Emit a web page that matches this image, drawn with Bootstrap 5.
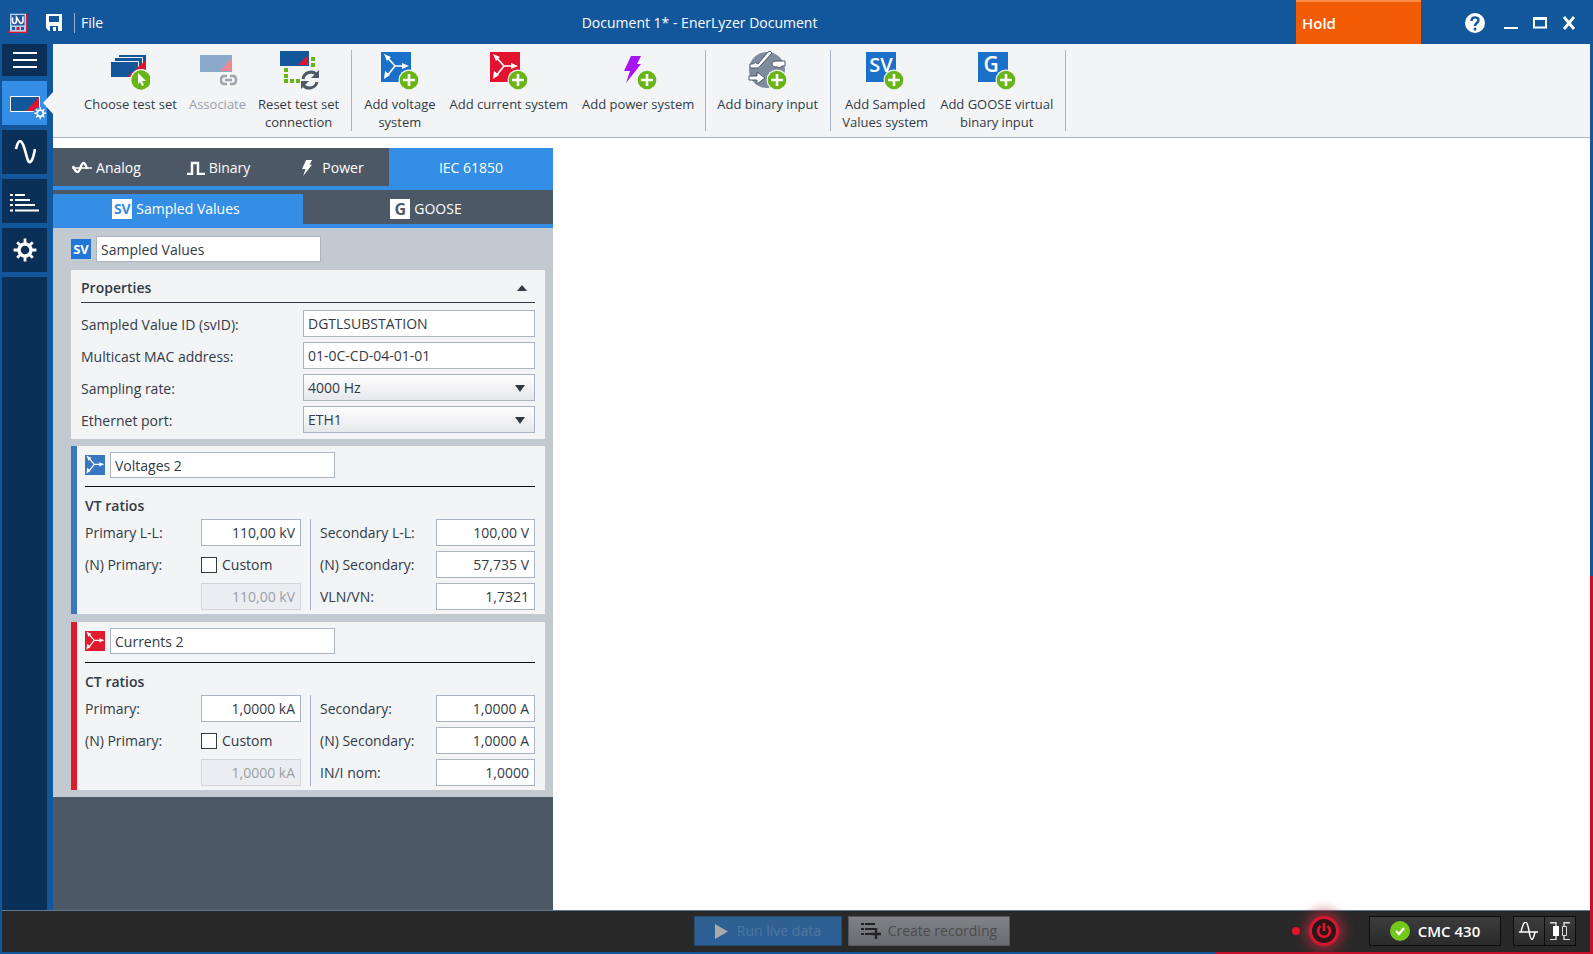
<!DOCTYPE html>
<html lang="en">
<head>
<meta charset="utf-8">
<meta name="viewport" content="width=device-width, initial-scale=1">
<title>Document 1* - EnerLyzer Document</title>
<link href="https://cdn.jsdelivr.net/npm/bootstrap@5.3.0/dist/css/bootstrap.min.css" rel="stylesheet">
<style>
:root{--blue:#12579c;--navy:#0b3058;--sky:#348ee6;--slate:#4d5866;--paper:#f2f4f6;--steel:#c3c9d1;--line:#abb4c3;--ink:#333a46}
body{font-family:"Open Sans","Noto Sans",sans-serif;font-size:14px;line-height:18px;color:var(--ink);background:var(--blue)}
button{border:0;background:none;color:inherit;padding:0}
a{color:inherit;text-decoration:none}
svg{display:block;flex:none}
.frame{min-height:100vh;border-right:3px solid var(--blue);border-bottom:2px solid var(--blue);position:relative}
.edge-right{position:absolute;right:-3px;top:60.5%;bottom:-2px;width:3px;background:#c8102a}
.edge-bottom{position:absolute;right:-3px;left:76.5%;bottom:-2px;height:2px;background:#c8102a}
.titlebar{height:44px;color:#fff;padding-top:1px}
.title-left{padding-left:8px;gap:17px}
.file-link{border-left:1px solid #8fb0d2;padding:0 0 0 6px;line-height:20px;margin-left:-6px}
.hold{width:125px;background:#f25c05;border-top:2px solid #ff8a45;font-weight:600;font-size:15px;padding-left:6px;margin:-1px 44px 0 0}
.win{gap:15px;padding-right:14px}
.side{width:53px;padding-left:2px;gap:5px}
.side button,.side-fill{width:45px;height:44px;background:var(--navy);display:flex;align-items:center;justify-content:center}
.side .menu-btn{height:32px}
.side .on{background:var(--sky);position:relative}
.side .on::after{content:"";position:absolute;right:-6px;top:11px;border:11px solid transparent;border-left:0;border-right:10px solid var(--paper)}
.side-fill{flex:1 1 auto;height:auto}
.ribbon{background:var(--paper);border-bottom:1px solid var(--line);height:94px;padding:6px 0 5px 25px}
.group-bar{border-right:1px solid var(--line);padding:0 6px 0 5px;height:81px}
.group-bar button{display:flex;flex-direction:column;align-items:center;padding:0 6px;line-height:18px;gap:5px;font-size:13px;color:var(--ink)}
.group-wide button{padding:0 7px}
.group-wide{padding:0 4px 0 5px}
.group-bar button svg{width:40px;height:40px}
.group-bar button:disabled{color:#9da1a7}
.work{padding-top:10px}
.panel{width:500px;background:var(--slate)}
.tabs-main{border-bottom:4px solid var(--sky);height:42px;color:#fff}
.tabs-main button,.tabs-sub button{display:flex;align-items:center;justify-content:center;gap:4px}
.tabs-main button{width:112px;padding:1px 5px 0 0}
.tabs-main .power-tab{gap:10px;padding-right:0}
.tabs-main .wide{background:var(--sky);padding-right:0}
.tabs-sub{border-bottom:4px solid var(--sky);height:34px;margin-top:4px;color:#fff}
.tabs-sub button{flex:1;padding-right:4px}
.tabs-sub .on{background:var(--sky)}
.tag{width:20px;height:20px;font:700 13px/20px "Open Sans",sans-serif;text-align:center;background:#fff;color:var(--sky);flex:none}
.tabs-sub .tag{font-size:14px}
.tabs-sub .tag-dark{color:var(--slate);font-size:16px}
.tag-blue{background:#1f78d8;color:#fff}
.settings{background:var(--steel);padding:8px 8px 7px 18px}
.name-row{gap:5px}
.field{border:1px solid var(--line);background:#fff;height:27px;padding:0 4px;color:var(--ink);border-radius:0;min-width:0;width:100%;outline:0}
.field-name{width:225px;height:26px}
select.field{appearance:none;background:linear-gradient(#fff,#e6e7ea)}
.pick{position:relative}
.pick svg{position:absolute;right:10px;top:11px}
.box{background:var(--paper)}
.props{padding:6px 10px;margin-bottom:7px}
.props h2,.sys h3{font-size:14px;line-height:24px;font-weight:600;margin:0}
.props-head{border-bottom:1px solid var(--ink);padding-bottom:2px;margin-bottom:7px}
.prop-grid{display:grid;grid-template-columns:222px 1fr;row-gap:5px;align-items:center}
.prop-grid label{padding-top:2px}
.sys{border-left:6px solid #3b76c0;padding:6px 10px 4px 8px}
.sys-red{border-color:#e01b2d}
.sys-head{border-bottom:1px solid #111;padding-bottom:8px;gap:5px}
.sys h3{margin-top:8px;padding-bottom:2px;line-height:22px}
.pair-grid{display:grid;grid-template-columns:116px 100px 1fr}
.pair-grid>div{display:grid;grid-auto-rows:27px;row-gap:5px;align-items:center}
.pair-grid .right-side{grid-template-columns:116px 1fr;border-left:1px solid var(--line);padding-left:9px;margin-left:9px}
.pair-grid .field{text-align:right;padding-right:5px}
.pair-grid .field:disabled{background:#ebedf1;border-color:#d0d4db;color:#9b9fa6}
.custom-row{gap:5px}
.tick{appearance:none;width:16px;height:16px;border:1px solid var(--ink);background:#fff;margin:0}
.footbar{height:42px;margin-left:2px;background:#282828;border-top:1px solid #5d7894;display:grid;grid-template-columns:11fr auto 9fr;align-items:center;padding:0 14px 1px 0}
.acts{gap:6px}
.act{height:30px;font-size:14px;display:flex;align-items:center;justify-content:center}
.run{width:148px;background:linear-gradient(#30608f,#2a5f98);border:1px solid #24496f;color:#50779f;gap:9px}
.rec{width:162px;background:linear-gradient(#818286,#6a6b6f);border:1px solid #55575a;color:#4a4b4f;gap:7px}
.dev{height:30px;border:1px solid #0c0c0c;background:linear-gradient(#3c3c3c,#2a2a2a);color:#fff;font-weight:600;font-size:15px}
.dev-name{width:132px;display:flex;align-items:center;justify-content:center;gap:8px;margin-right:12px}
.dev-icon{width:32px;display:flex;align-items:center;justify-content:center}
.dev-icon+.dev-icon{margin-left:-1px}
.rec-dot{width:8px;height:8px;border-radius:50%;background:#e8112d;margin-right:9px}
.power{width:30px;height:30px;border-radius:50%;border:3px solid #d8162f;background:#2a1517;box-shadow:0 0 14px 3px #b0283a;margin-right:30px;display:flex;align-items:center;justify-content:center}
</style>
</head>
<body>
<svg width="0" height="0" class="position-absolute" aria-hidden="true">
<defs>
<g id="plus"><circle cx="28" cy="28" r="10.5" fill="#f2f4f6"/><circle cx="28" cy="28" r="9.3" fill="#68b516"/><path d="M28 22v12M22 28h12" stroke="#fff" stroke-width="2.6"/></g>
<g id="star"><path d="M12 13 4 4M12 13 4 23M12 13h12" stroke="#fff" stroke-width="1.7" fill="none"/><path d="m1 1 7 3-4 4zM1 26l1-8 5 4zM26 13l-7-3v6z" fill="#fff"/></g>
<g id="cog" fill="none" stroke="#fff"><circle cx="12" cy="12" r="6" stroke-width="3.4"/><path d="M12 5V.6M12 19v4.4M5 12H.6M19 12h4.4M7 7 4.2 4.2M17 7l2.8-2.8M7 17l-2.8 2.8M17 17l2.8 2.8" stroke-width="2.8"/></g>
<path id="bolt" d="M7 0h10l-4 8h4L2 27l4-12H0z"/>
</defs>
</svg>
<div class="frame d-flex flex-column">
<header class="titlebar d-flex align-items-center">
  <div class="title-left d-flex align-items-center">
    <svg width="20" height="20" viewBox="0 0 20 20"><path d="M18 1h2v19H0v-2h18z" fill="#d8142f"/><rect x="2" y="0.700" width="16" height="18" fill="#b9cfe8"/><rect x="3.500" y="2" width="13" height="10.500" fill="#1b59a0"/><path d="M4.500 4.500v3q0 3 2 3t2-3v-3l4 6q2.500 0 2.500-3v-4" fill="none" stroke="#fff" stroke-width="1.600"/><path d="M4 15.500h3M13 15.500h3" stroke="#1b59a0" stroke-width="3"/><path d="M8.500 15.500h3" stroke="#d8142f" stroke-width="3"/></svg>
    <button aria-label="Save"><svg width="18" height="18" viewBox="0 0 18 18"><path d="M1 0h16v17H4l-3-3z" fill="#fff"/><path d="M4 2h10v6H4zM5 12h8v5h-2v-4H8v4H5z" fill="#12579c"/></svg></button>
    <a href="#" class="file-link">File</a>
  </div>
  <div class="flex-grow-1 text-center">Document 1* - EnerLyzer Document</div>
  <div class="d-flex align-items-center align-self-stretch">
    <div class="hold d-flex align-items-center align-self-stretch">Hold</div>
    <div class="win d-flex align-items-center">
      <button aria-label="Help" class="me-1"><svg width="20" height="20" viewBox="0 0 20 20"><circle cx="10" cy="10" r="10" fill="#fff"/><path d="M6.500 8c0-5 7-4.500 7-.800C13.500 10 10 10 10 13" fill="none" stroke="#12579c" stroke-width="2.400"/><circle cx="10" cy="16" r="1.500" fill="#12579c"/></svg></button>
      <button aria-label="Minimize"><svg width="14" height="14" viewBox="0 0 14 14"><path d="M0 12h14" stroke="#fff" stroke-width="2"/></svg></button>
      <button aria-label="Maximize"><svg width="14" height="14" viewBox="0 0 14 14"><path d="M1 2.500h12v9H1z" stroke="#fff" stroke-width="2" fill="none"/><path d="M0 2.500h14" stroke="#fff" stroke-width="3"/></svg></button>
      <button aria-label="Close"><svg width="14" height="14" viewBox="0 0 14 14"><path d="m2 1 10 12M12 1 2 13" stroke="#fff" stroke-width="2.800"/></svg></button>
    </div>
  </div>
</header>
<div class="d-flex flex-grow-1">
  <nav class="side d-flex flex-column flex-shrink-0" aria-label="Views">
    <button class="menu-btn" aria-label="Menu"><svg width="24" height="16" viewBox="0 0 24 16"><path d="M0 1h24M0 8h24M0 15h24" stroke="#fff" stroke-width="2"/></svg></button>
    <button class="on" aria-label="Test set"><svg width="45" height="44" viewBox="0 0 45 44"><path d="M8.500 15.500h29v15h-29z" fill="#12579c" stroke="#fff"/><path d="M37 16v14H24z" fill="#e3132f"/><circle cx="38" cy="33" r="7" fill="#348ee6"/><use href="#cog" transform="translate(32 26) scale(.52)"/></svg></button>
    <button aria-label="Signals"><svg width="22" height="24" viewBox="0 0 22 24"><path d="M2 9C4 0 7-2 10 7s4 20 8 13c2-4 2-7 3-11" fill="none" stroke="#fff" stroke-width="2.600"/></svg></button>
    <button aria-label="Recordings"><svg width="30" height="22" viewBox="0 0 30 22"><path d="M0 5h3M0 10h3M0 15h3M0 20.500h3M5 5h10M5 10h15M5 15h20M5 20.500h24" stroke="#fff" stroke-width="2"/></svg></button>
    <button aria-label="Settings"><svg width="24" height="24" viewBox="0 0 24 24"><use href="#cog"/></svg></button>
    <div class="side-fill"></div>
  </nav>
  <main class="flex-grow-1 d-flex flex-column bg-white">
    <div class="ribbon d-flex">
      <div class="group-bar d-flex align-items-start ps-0">
        <button><svg viewBox="0 0 40 40"><g stroke="#f2f4f6"><path d="M8.500 4.500h28v16h-28z" fill="#12579c"/><path d="M4.500 7.500h28v16h-28z" fill="#12579c"/><path d="M.500 11.500h28v16h-28z" fill="#12579c"/></g><path d="M36 10v10H24v7h-7z" fill="#e0152f"/><circle cx="31" cy="30" r="11" fill="#f2f4f6"/><circle cx="31" cy="30" r="9.700" fill="#68b516"/><path d="m28 23 8 8h-4l2 4-2 1-2-4-2 2z" fill="#fff"/></svg>Choose test set</button>
        <button disabled><svg viewBox="0 0 40 40"><path d="M2 5h32v17H2z" fill="#8ba9ca"/><path d="M33 9v12H22z" fill="#f18793"/><path d="M29 26h-3q-3 0-3 4t3 4h3M32 26h3q3 0 3 4t-3 4h-3M27 30h7" fill="none" stroke="#9fa4ac" stroke-width="2.400"/></svg>Associate</button>
        <button><svg viewBox="0 0 40 40"><path d="M1 1h29v15H1z" fill="#12579c"/><path d="M29 5v10H19z" fill="#e0152f"/><path d="M34 7v11M7 18v12" stroke="#68b516" stroke-width="4" stroke-dasharray="4 2"/><path d="M5 31h18" stroke="#68b516" stroke-width="4" stroke-dasharray="4 2"/><path d="M24 29a8 8 0 0 1 14-4M38 32a8 8 0 0 1-14 3" fill="none" stroke="#4d5866" stroke-width="3"/><path d="M40 20v8h-8zM22 39v-8h8z" fill="#4d5866"/></svg><span>Reset test set<br>connection</span></button>
      </div>
      <div class="group-bar group-wide d-flex align-items-start">
        <button><svg viewBox="0 0 40 40"><g transform="translate(1 2)"><path d="M0 0h30v30H0z" fill="#1b70ca"/><use href="#star" x="2" y="1"/><use href="#plus"/></g></svg><span>Add voltage<br>system</span></button>
        <button><svg viewBox="0 0 40 40"><g transform="translate(1 2)"><path d="M0 0h30v30H0z" fill="#e3132f"/><use href="#star" x="2" y="1"/><use href="#plus"/></g></svg>Add current system</button>
        <button><svg viewBox="0 0 40 40"><use href="#bolt" fill="#a715f4" transform="translate(6 6)"/><use href="#plus" x="1" y="2"/></svg>Add power system</button>
      </div>
      <div class="group-bar d-flex align-items-start">
        <button><svg viewBox="0 0 40 40"><circle cx="19" cy="20" r="18" fill="#7f8b9e"/><g fill="#fff" stroke="#4d5866"><path d="M2 14h3q2-3 5 0L20 2q2-2 4 1L13 15q-2 4-6 3H2zM37 11v5h-3q-2 3-5 1-5 0-5-3t5-3zM1 26h8v-4l8 6-8 6v-4H1z"/></g><use href="#plus" x="1" y="2"/></svg>Add binary input</button>
      </div>
      <div class="group-bar d-flex align-items-start">
        <button><svg viewBox="0 0 40 40"><g transform="translate(1 2)"><path d="M0 0h30v30H0z" fill="#1b70ca"/><text x="15" y="20" text-anchor="middle" font-family="Open Sans" font-weight="600" font-size="20" fill="#fff">SV</text><use href="#plus"/></g></svg><span>Add Sampled<br>Values system</span></button>
        <button><svg viewBox="0 0 40 40"><g transform="translate(1 2)"><path d="M0 0h30v30H0z" fill="#1b70ca"/><text x="13" y="20" text-anchor="middle" font-family="Open Sans" font-weight="600" font-size="21" fill="#fff">G</text><use href="#plus"/></g></svg><span>Add GOOSE virtual<br>binary input</span></button>
      </div>
    </div>
    <div class="work flex-grow-1 d-flex">
      <section class="panel">
        <div class="tabs-main d-flex">
          <button><svg width="20" height="14" viewBox="0 0 20 14"><path d="M0 7h20" stroke="#fff" stroke-width="1.500"/><path d="M1 5q4 10 7 3c2-6 4-10 7 0" fill="none" stroke="#fff" stroke-width="2.400"/></svg>Analog</button>
          <button><svg width="18" height="14" viewBox="0 0 18 14"><path d="M0 13h5V2h6v11h7" fill="none" stroke="#fff" stroke-width="2.400"/></svg>Binary</button>
          <button class="power-tab"><svg width="10" height="16" viewBox="0 0 17 27"><use href="#bolt" fill="#fff"/></svg>Power</button>
          <button class="wide flex-grow-1">IEC 61850</button>
        </div>
        <div class="tabs-sub d-flex">
          <button class="on"><span class="tag">SV</span>Sampled Values</button>
          <button><span class="tag tag-dark">G</span>GOOSE</button>
        </div>
        <div class="settings">
          <div class="name-row d-flex align-items-center mb-2"><span class="tag tag-blue">SV</span><input class="field field-name" value="Sampled Values" aria-label="Name"></div>
          <div class="box props">
            <div class="props-head d-flex justify-content-between align-items-center"><h2>Properties</h2><button aria-label="Collapse" class="pe-2"><svg width="10" height="6" viewBox="0 0 10 6"><path d="M0 6l5-6 5 6z" fill="#333a46"/></svg></button></div>
            <div class="prop-grid">
              <label for="svid">Sampled Value ID (svID):</label><input class="field" id="svid" value="DGTLSUBSTATION">
              <label for="mac">Multicast MAC address:</label><input class="field" id="mac" value="01-0C-CD-04-01-01">
              <label for="rate">Sampling rate:</label><div class="pick"><select class="field" id="rate"><option>4000 Hz</option></select><svg width="10" height="7" viewBox="0 0 10 7"><path d="M0 0h10L5 7z" fill="#333a46"/></svg></div>
              <label for="port">Ethernet port:</label><div class="pick"><select class="field" id="port"><option>ETH1</option></select><svg width="10" height="7" viewBox="0 0 10 7"><path d="M0 0h10L5 7z" fill="#333a46"/></svg></div>
            </div>
          </div>
          <div class="box sys">
            <div class="sys-head d-flex align-items-center"><svg width="20" height="20" viewBox="0 0 28 28"><path d="M0 0h28v28H0z" fill="#3b76c0"/><use href="#star" x="1"/></svg><input class="field field-name" value="Voltages 2" aria-label="Voltage system name"></div>
            <h3>VT ratios</h3>
            <div class="pair-grid">
              <div><label for="v1">Primary L-L:</label><label for="v2">(N) Primary:</label><span></span></div>
              <div><input class="field" id="v1" value="110,00 kV"><span class="custom-row d-flex align-items-center"><input type="checkbox" class="tick" id="vc"><label for="vc">Custom</label></span><input class="field" id="v2" value="110,00 kV" disabled></div>
              <div class="right-side"><label for="v3">Secondary L-L:</label><input class="field" id="v3" value="100,00 V"><label for="v4">(N) Secondary:</label><input class="field" id="v4" value="57,735 V"><label for="v5">VLN/VN:</label><input class="field" id="v5" value="1,7321"></div>
            </div>
          </div>
          <div class="box sys sys-red mt-2">
            <div class="sys-head d-flex align-items-center"><svg width="20" height="20" viewBox="0 0 28 28"><path d="M0 0h28v28H0z" fill="#e01b2d"/><use href="#star" x="1"/></svg><input class="field field-name" value="Currents 2" aria-label="Current system name"></div>
            <h3>CT ratios</h3>
            <div class="pair-grid">
              <div><label for="c1">Primary:</label><label for="c2">(N) Primary:</label><span></span></div>
              <div><input class="field" id="c1" value="1,0000 kA"><span class="custom-row d-flex align-items-center"><input type="checkbox" class="tick" id="cc"><label for="cc">Custom</label></span><input class="field" id="c2" value="1,0000 kA" disabled></div>
              <div class="right-side"><label for="c3">Secondary:</label><input class="field" id="c3" value="1,0000 A"><label for="c4">(N) Secondary:</label><input class="field" id="c4" value="1,0000 A"><label for="c5">IN/I nom:</label><input class="field" id="c5" value="1,0000"></div>
            </div>
          </div>
        </div>
      </section>
    </div>
  </main>
</div>
<footer class="footbar">
  <div></div>
  <div class="acts d-flex">
    <button class="act run" disabled><svg width="13" height="15" viewBox="0 0 13 15"><path d="M0 0l13 7.500L0 15z" fill="#a9a9ac"/></svg>Run live data</button>
    <button class="act rec" disabled><svg width="20" height="18" viewBox="0 0 20 18"><path d="M0 2h3M4 2h10M0 7h3M4 7h10M0 12h3M4 12h6" stroke="#222" stroke-width="2.200"/><path d="M15 6v11M10 12h10" stroke="#222" stroke-width="2.400"/></svg>Create recording</button>
  </div>
  <div class="d-flex align-items-center justify-content-end">
    <span class="rec-dot"></span>
    <button class="power" aria-label="Power"><svg width="16" height="16" viewBox="0 0 16 16"><path d="M4.500 3a6 6 0 1 0 7 0M8 0v8" fill="none" stroke="#e8112d" stroke-width="2.600"/></svg></button>
    <button class="dev dev-name"><svg width="20" height="20" viewBox="0 0 20 20"><circle cx="10" cy="10" r="10" fill="#72c919"/><path d="m6 10 3 3 5-6" stroke="#fff" stroke-width="2.200" fill="none"/></svg>CMC 430</button>
    <button class="dev dev-icon" aria-label="Analog outputs"><svg width="20" height="18" viewBox="0 0 20 18"><path d="M0 10h19M2 10C5-3 8-3 10 9s4 10 6 1" fill="none" stroke="#fff" stroke-width="1.500"/></svg></button>
    <button class="dev dev-icon" aria-label="Binary inputs"><svg width="20" height="18" viewBox="0 0 20 18"><path d="M0 .700h6v17H0M20 .700h-6v17h6" fill="none" stroke="#ddd" stroke-width="1.400"/><path d="M3 4h6v10H3z" fill="#fff"/><path d="M12.500 4.500h4v9h-4z" fill="#2f2f2f" stroke="#ddd"/></svg></button>
  </div>
</footer>
<div class="edge-right"></div><div class="edge-bottom"></div>
</div>
<script src="https://cdn.jsdelivr.net/npm/bootstrap@5.3.0/dist/js/bootstrap.bundle.min.js"></script>
</body>
</html>
